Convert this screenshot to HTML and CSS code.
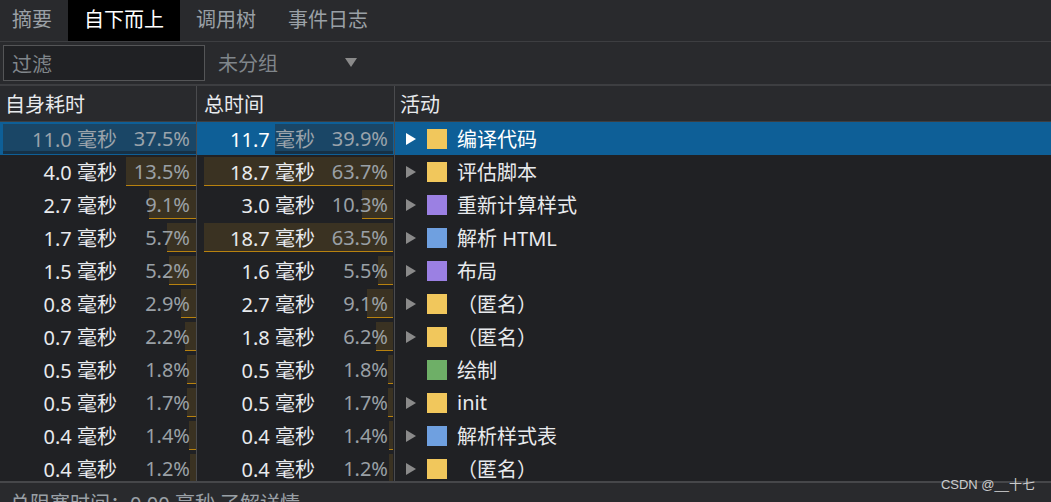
FILE: index.html
```html
<!DOCTYPE html>
<html lang="zh-CN">
<head>
<meta charset="utf-8">
<title>自下而上</title>
<link rel="stylesheet" href="styles.css">
</head>
<body>
<div class="app">
  <div class="tabs">
    <div class="tab first">摘要</div>
    <div class="tab active">自下而上</div>
    <div class="tab">调用树</div>
    <div class="tab">事件日志</div>
  </div>
  <div class="toolbar">
    <div class="filter">过滤</div>
    <div class="select">
      <span>未分组</span>
      <svg class="caret" width="12" height="9" viewBox="0 0 12 9"><polygon points="0,0 12,0 6,9" fill="#8a8a8a"/></svg>
    </div>
  </div>
  <div class="grid">
    <div class="row head">
      <div class="cell c1">自身耗时</div>
      <div class="cell c2">总时间</div>
      <div class="cell c3">活动</div>
    </div>
    <div class="rows">
      <div class="row sel">
        <div class="cell num c1"><div class="bar" style="width:98.5%"></div><span class="t dim">11.0 毫秒</span><span class="p">37.5%</span></div>
        <div class="cell num c2"><div class="bar" style="width:60.1%"></div><span class="t"><span class="hi">11.7</span><span class="dim"> 毫秒</span></span><span class="p">39.9%</span></div>
        <div class="cell act c3"><svg class="tri" width="10" height="12" viewBox="0 0 10 12"><polygon points="0,0 10,6 0,12"/></svg><span class="sq y"></span><span class="name">编译代码</span></div>
      </div>
      <div class="row">
        <div class="cell num c1"><div class="bar" style="width:35.5%"></div><span class="t">4.0 毫秒</span><span class="p">13.5%</span></div>
        <div class="cell num c2"><div class="bar" style="width:96%"></div><span class="t">18.7 毫秒</span><span class="p">63.7%</span></div>
        <div class="cell act c3"><svg class="tri" width="10" height="12" viewBox="0 0 10 12"><polygon points="0,0 10,6 0,12"/></svg><span class="sq y"></span><span class="name">评估脚本</span></div>
      </div>
      <div class="row">
        <div class="cell num c1"><div class="bar" style="width:23.9%"></div><span class="t">2.7 毫秒</span><span class="p">9.1%</span></div>
        <div class="cell num c2"><div class="bar" style="width:15.5%"></div><span class="t">3.0 毫秒</span><span class="p">10.3%</span></div>
        <div class="cell act c3"><svg class="tri" width="10" height="12" viewBox="0 0 10 12"><polygon points="0,0 10,6 0,12"/></svg><span class="sq p1"></span><span class="name">重新计算样式</span></div>
      </div>
      <div class="row">
        <div class="cell num c1"><div class="bar" style="width:15%"></div><span class="t">1.7 毫秒</span><span class="p">5.7%</span></div>
        <div class="cell num c2"><div class="bar" style="width:95.7%"></div><span class="t">18.7 毫秒</span><span class="p">63.5%</span></div>
        <div class="cell act c3"><svg class="tri" width="10" height="12" viewBox="0 0 10 12"><polygon points="0,0 10,6 0,12"/></svg><span class="sq b"></span><span class="name">解析 HTML</span></div>
      </div>
      <div class="row">
        <div class="cell num c1"><div class="bar" style="width:13.7%"></div><span class="t">1.5 毫秒</span><span class="p">5.2%</span></div>
        <div class="cell num c2"><div class="bar" style="width:7.5%"></div><span class="t">1.6 毫秒</span><span class="p">5.5%</span></div>
        <div class="cell act c3"><svg class="tri" width="10" height="12" viewBox="0 0 10 12"><polygon points="0,0 10,6 0,12"/></svg><span class="sq p1"></span><span class="name">布局</span></div>
      </div>
      <div class="row">
        <div class="cell num c1"><div class="bar" style="width:7.6%"></div><span class="t">0.8 毫秒</span><span class="p">2.9%</span></div>
        <div class="cell num c2"><div class="bar" style="width:13%"></div><span class="t">2.7 毫秒</span><span class="p">9.1%</span></div>
        <div class="cell act c3"><svg class="tri" width="10" height="12" viewBox="0 0 10 12"><polygon points="0,0 10,6 0,12"/></svg><span class="sq y"></span><span class="name">（匿名）</span></div>
      </div>
      <div class="row">
        <div class="cell num c1"><div class="bar" style="width:5.8%"></div><span class="t">0.7 毫秒</span><span class="p">2.2%</span></div>
        <div class="cell num c2"><div class="bar" style="width:8.6%"></div><span class="t">1.8 毫秒</span><span class="p">6.2%</span></div>
        <div class="cell act c3"><svg class="tri" width="10" height="12" viewBox="0 0 10 12"><polygon points="0,0 10,6 0,12"/></svg><span class="sq y"></span><span class="name">（匿名）</span></div>
      </div>
      <div class="row">
        <div class="cell num c1"><div class="bar" style="width:4.7%"></div><span class="t">0.5 毫秒</span><span class="p">1.8%</span></div>
        <div class="cell num c2"><div class="bar" style="width:2.5%"></div><span class="t">0.5 毫秒</span><span class="p">1.8%</span></div>
        <div class="cell act c3"><span class="tri-space"></span><span class="sq g"></span><span class="name">绘制</span></div>
      </div>
      <div class="row">
        <div class="cell num c1"><div class="bar" style="width:4.5%"></div><span class="t">0.5 毫秒</span><span class="p">1.7%</span></div>
        <div class="cell num c2"><div class="bar" style="width:2.4%"></div><span class="t">0.5 毫秒</span><span class="p">1.7%</span></div>
        <div class="cell act c3"><svg class="tri" width="10" height="12" viewBox="0 0 10 12"><polygon points="0,0 10,6 0,12"/></svg><span class="sq y"></span><span class="name">init</span></div>
      </div>
      <div class="row">
        <div class="cell num c1"><div class="bar" style="width:3.7%"></div><span class="t">0.4 毫秒</span><span class="p">1.4%</span></div>
        <div class="cell num c2"><div class="bar" style="width:2%"></div><span class="t">0.4 毫秒</span><span class="p">1.4%</span></div>
        <div class="cell act c3"><svg class="tri" width="10" height="12" viewBox="0 0 10 12"><polygon points="0,0 10,6 0,12"/></svg><span class="sq b"></span><span class="name">解析样式表</span></div>
      </div>
      <div class="row">
        <div class="cell num c1"><div class="bar" style="width:3.2%"></div><span class="t">0.4 毫秒</span><span class="p">1.2%</span></div>
        <div class="cell num c2"><div class="bar" style="width:1.8%"></div><span class="t">0.4 毫秒</span><span class="p">1.2%</span></div>
        <div class="cell act c3"><svg class="tri" width="10" height="12" viewBox="0 0 10 12"><polygon points="0,0 10,6 0,12"/></svg><span class="sq y"></span><span class="name">（匿名）</span></div>
      </div>
    </div>
  </div>
  <div class="status">总阻塞时间：0.00 毫秒 了解详情</div>
  <div class="watermark">CSDN @__十七</div>
</div>
</body>
</html>
```

FILE: styles.css
```css
* { box-sizing: border-box; }
html, body { margin: 0; padding: 0; background: #202124; }
body {
  font-family: "Noto Sans", "Noto Sans CJK SC", sans-serif;
  font-size: 20px;
  color: #e8eaed;
  overflow: hidden;
}
.app {
  position: relative;
  width: 1051px;
  height: 502px;
  display: flex;
  flex-direction: column;
  overflow: hidden;
}
.tabs {
  height: 42px;
  flex: none;
  display: flex;
  background: #292a2d;
  border-bottom: 1px solid #3d3e41;
  margin-left: -4px;
}
.tab {
  height: 41px;
  line-height: 40px;
  padding: 0 16px;
  color: #9aa0a6;
  white-space: nowrap;
}
.tab.active { background: #000; color: #fff; }
.toolbar {
  height: 44px;
  flex: none;
  display: flex;
  align-items: center;
  background: #292a2d;
  border-bottom: 2px solid #3d3e41;
  padding-left: 3px;
  padding-bottom: 1px;
}
.filter {
  width: 202px;
  height: 36px;
  border: 1px solid #545557;
  background: #202124;
  color: #80868b;
  padding-left: 8px;
  line-height: 38px;
}
.select {
  display: flex;
  align-items: center;
  margin-left: 13px;
  color: #80868b;
}
.select .caret { margin-left: 67px; margin-top: -1px; }
.grid { flex: 1; display: flex; flex-direction: column; min-height: 0; overflow: hidden; }
.row {
  display: grid;
  grid-template-columns: 196px 198px 1fr;
  height: 33px;
  flex: none;
}
.row.head {
  height: 36px;
  background: #292a2d;
  border-bottom: 1px solid #3d3e41;
}
.head .cell { line-height: 38px; padding-left: 5px; color: #e8eaed; }
.head .c2 { padding-left: 7px; }
.cell.c2, .cell.c3 { border-left: 1px solid #4a4b4e; }
.rows { display: flex; flex-direction: column; }
.cell.num {
  position: relative;
  display: flex;
  justify-content: flex-end;
  align-items: center;
  padding-right: 6px;
  white-space: nowrap;
}
.bar {
  position: absolute;
  right: 0;
  top: 2px;
  height: 29px;
  background: #3a3222;
  border-bottom: 1px solid #b8820f;
}
.c2 .bar { right: 1px; }
.t, .p { position: relative; }
.t { color: #e8eaed; }
.p { width: 66px; margin-left: 7px; text-align: right; color: #9aa0a6; }
.cell.act {
  display: flex;
  align-items: center;
  padding-left: 11px;
  white-space: nowrap;
}
.tri { fill: #8a8a8a; flex: none; }
.tri-space { width: 10px; flex: none; }
.sq { width: 20px; height: 20px; margin-left: 11px; margin-right: 10px; flex: none; }
.sq.y { background: #f1c75c; }
.sq.p1 { background: #9b80e3; }
.sq.b { background: #6fa0e0; }
.sq.g { background: #6eaf67; }
.name { color: #e8eaed; }
.row.sel { background: #0e5f97; }
.row.sel .bar { background: #1a4666; border-bottom: 3px solid #163146; height: 30px; }
.row.sel .c1 .bar { right: 0; }
.row.sel .dim, .row.sel .p { color: #9aa3ab; }
.row.sel .hi { color: #ffffff; }
.row.sel .tri { fill: #ffffff; }
.row.sel .name { color: #ffffff; }
.status {
  flex: none;
  height: 21px;
  background: #292a2d;
  border-top: 2px solid #46474a;
  padding-left: 10px;
  padding-top: 9px;
  line-height: 24px;
  color: #9aa0a6;
  white-space: nowrap;
  overflow: visible;
}
.watermark {
  position: absolute;
  right: 16px;
  bottom: 9px;
  font-family: "Liberation Sans", "Noto Sans CJK SC", sans-serif;
  font-size: 13px;
  color: rgba(235, 235, 235, 0.85);
}
```
